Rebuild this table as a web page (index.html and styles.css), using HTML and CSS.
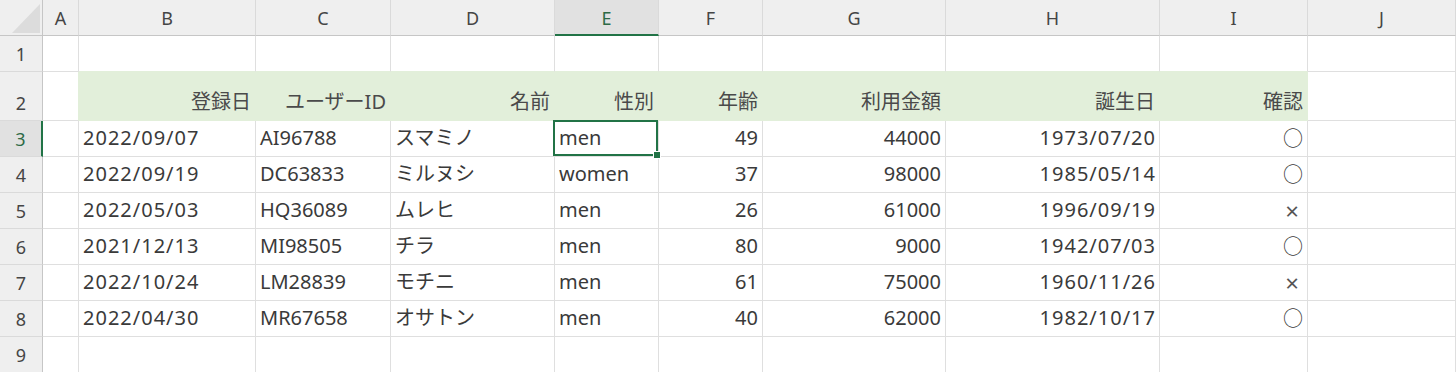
FILE: index.html
```html
<!DOCTYPE html>
<html lang="ja">
<head>
<meta charset="utf-8">
<title>Sheet</title>
<link rel="stylesheet" href="styles.css">
</head>
<body>
<div class="sheet">
  <!-- header row -->
  <div class="c corner"><svg width="28" height="29" viewBox="0 0 28 29"><polygon points="0,29 28,29 28,0" fill="#dcdcdc"/></svg></div>
  <div class="c ch">A</div>
  <div class="c ch">B</div>
  <div class="c ch">C</div>
  <div class="c ch">D</div>
  <div class="c ch ch-sel">E</div>
  <div class="c ch">F</div>
  <div class="c ch">G</div>
  <div class="c ch">H</div>
  <div class="c ch">I</div>
  <div class="c ch">J</div>

  <!-- row 1 -->
  <div class="c rh">1</div>
  <div class="c"></div>
  <div class="c gb"></div>
  <div class="c gb"></div>
  <div class="c gb"></div>
  <div class="c gb"></div>
  <div class="c gb"></div>
  <div class="c gb"></div>
  <div class="c gb"></div>
  <div class="c gb"></div>
  <div class="c"></div>

  <!-- row 2 -->
  <div class="c rh">2</div>
  <div class="c gr"></div>
  <div class="c g r">登録日</div>
  <div class="c g r">ユーザーID</div>
  <div class="c g r">名前</div>
  <div class="c g r">性別</div>
  <div class="c g r">年齢</div>
  <div class="c g r">利用金額</div>
  <div class="c g r">誕生日</div>
  <div class="c g r">確認</div>
  <div class="c"></div>

  <!-- row 3 -->
  <div class="c rh rh-sel">3</div>
  <div class="c"></div>
  <div class="c d">2022/09/07</div>
  <div class="c">AI96788</div>
  <div class="c">スマミノ</div>
  <div class="c active">men<span class="sel-box"><span class="handle"></span></span></div>
  <div class="c r">49</div>
  <div class="c r">44000</div>
  <div class="c r d">1973/07/20</div>
  <div class="c r mark">○</div>
  <div class="c"></div>

  <!-- row 4 -->
  <div class="c rh">4</div>
  <div class="c"></div>
  <div class="c d">2022/09/19</div>
  <div class="c">DC63833</div>
  <div class="c">ミルヌシ</div>
  <div class="c">women</div>
  <div class="c r">37</div>
  <div class="c r">98000</div>
  <div class="c r d">1985/05/14</div>
  <div class="c r mark">○</div>
  <div class="c"></div>

  <!-- row 5 -->
  <div class="c rh">5</div>
  <div class="c"></div>
  <div class="c d">2022/05/03</div>
  <div class="c">HQ36089</div>
  <div class="c">ムレヒ</div>
  <div class="c">men</div>
  <div class="c r">26</div>
  <div class="c r">61000</div>
  <div class="c r d">1996/09/19</div>
  <div class="c r cross">×</div>
  <div class="c"></div>

  <!-- row 6 -->
  <div class="c rh">6</div>
  <div class="c"></div>
  <div class="c d">2021/12/13</div>
  <div class="c">MI98505</div>
  <div class="c">チラ</div>
  <div class="c">men</div>
  <div class="c r">80</div>
  <div class="c r">9000</div>
  <div class="c r d">1942/07/03</div>
  <div class="c r mark">○</div>
  <div class="c"></div>

  <!-- row 7 -->
  <div class="c rh">7</div>
  <div class="c"></div>
  <div class="c d">2022/10/24</div>
  <div class="c">LM28839</div>
  <div class="c">モチニ</div>
  <div class="c">men</div>
  <div class="c r">61</div>
  <div class="c r">75000</div>
  <div class="c r d">1960/11/26</div>
  <div class="c r cross">×</div>
  <div class="c"></div>

  <!-- row 8 -->
  <div class="c rh">8</div>
  <div class="c"></div>
  <div class="c d">2022/04/30</div>
  <div class="c">MR67658</div>
  <div class="c">オサトン</div>
  <div class="c">men</div>
  <div class="c r">40</div>
  <div class="c r">62000</div>
  <div class="c r d">1982/10/17</div>
  <div class="c r mark">○</div>
  <div class="c"></div>

  <!-- row 9 -->
  <div class="c rh">9</div>
  <div class="c"></div>
  <div class="c"></div>
  <div class="c"></div>
  <div class="c"></div>
  <div class="c"></div>
  <div class="c"></div>
  <div class="c"></div>
  <div class="c"></div>
  <div class="c"></div>
  <div class="c"></div>
</div>
</body>
</html>
```
FILE: styles.css
```css
html, body {
  margin: 0;
  padding: 0;
  background: #ffffff;
}

.sheet {
  display: grid;
  grid-template-columns: 43px 36px 177px 135px 164px 104px 104px 183px 214px 148px 148px;
  grid-template-rows: 36px 36px 49px repeat(7, 36px);
  width: 1456px;
  overflow: hidden;
}

.c {
  box-sizing: border-box;
  position: relative;
  display: flex;
  align-items: flex-end;
  justify-content: flex-start;
  padding: 0 4px 6px 4px;
  border-right: 1px solid #dfdfdf;
  border-bottom: 1px solid #dfdfdf;
  font-family: "Noto Sans", "Noto Sans CJK JP", sans-serif;
  font-size: 20px;
  line-height: 24px;
  color: #3a3a3a;
  white-space: nowrap;
}

.r {
  justify-content: flex-end;
}

.d {
  letter-spacing: 1px;
}

.d.r {
  padding-right: 3px;
}

.corner {
  background: #efefef;
  border-right-color: #c6c6c6;
  border-bottom-color: #c6c6c6;
  justify-content: flex-end;
  padding: 0 2px 2px 0;
}

.corner svg {
  display: block;
}

.ch {
  background: #efefef;
  border-right-color: #dadada;
  border-bottom-color: #c6c6c6;
  justify-content: center;
  font-size: 18px;
  padding: 0 0 5px 0;
  color: #454545;
}

.ch-sel {
  background: #e1e1e1;
  border-bottom: 2px solid #217346;
  padding-bottom: 4px;
  color: #2d6a46;
}

.rh {
  background: #efefef;
  border-right-color: #c6c6c6;
  border-bottom-color: #dadada;
  justify-content: center;
  font-size: 18px;
  padding: 0 0 5px 0;
  color: #454545;
}

.rh-sel {
  background: #e1e1e1;
  border-right: 2px solid #217346;
  color: #2d6a46;
}

/* green filled header row */
.g {
  background: #e2efda;
  border-right-color: #e2efda;
  border-bottom-color: #e2efda;
  padding-right: 4px;
  color: #4a4a4a;
}

.gb {
  border-bottom-color: #e2efda;
}

.gr {
  border-right-color: #e2efda;
}

.mark {
  font-family: "Noto Sans CJK JP", sans-serif;
  padding-right: 4px;
}

.cross {
  font-size: 24px;
  padding-right: 8px;
  padding-bottom: 5px;
  color: #555555;
}

/* active cell selection overlay */
.active {
  z-index: 2;
}

.sel-box {
  position: absolute;
  left: -2px;
  top: -1px;
  right: 0;
  bottom: 0;
  border: 2px solid #217346;
  box-sizing: border-box;
}

.handle {
  position: absolute;
  right: -5px;
  bottom: -5px;
  width: 8px;
  height: 8px;
  box-sizing: border-box;
  background: #217346;
  border: 1px solid #ffffff;
}
```
